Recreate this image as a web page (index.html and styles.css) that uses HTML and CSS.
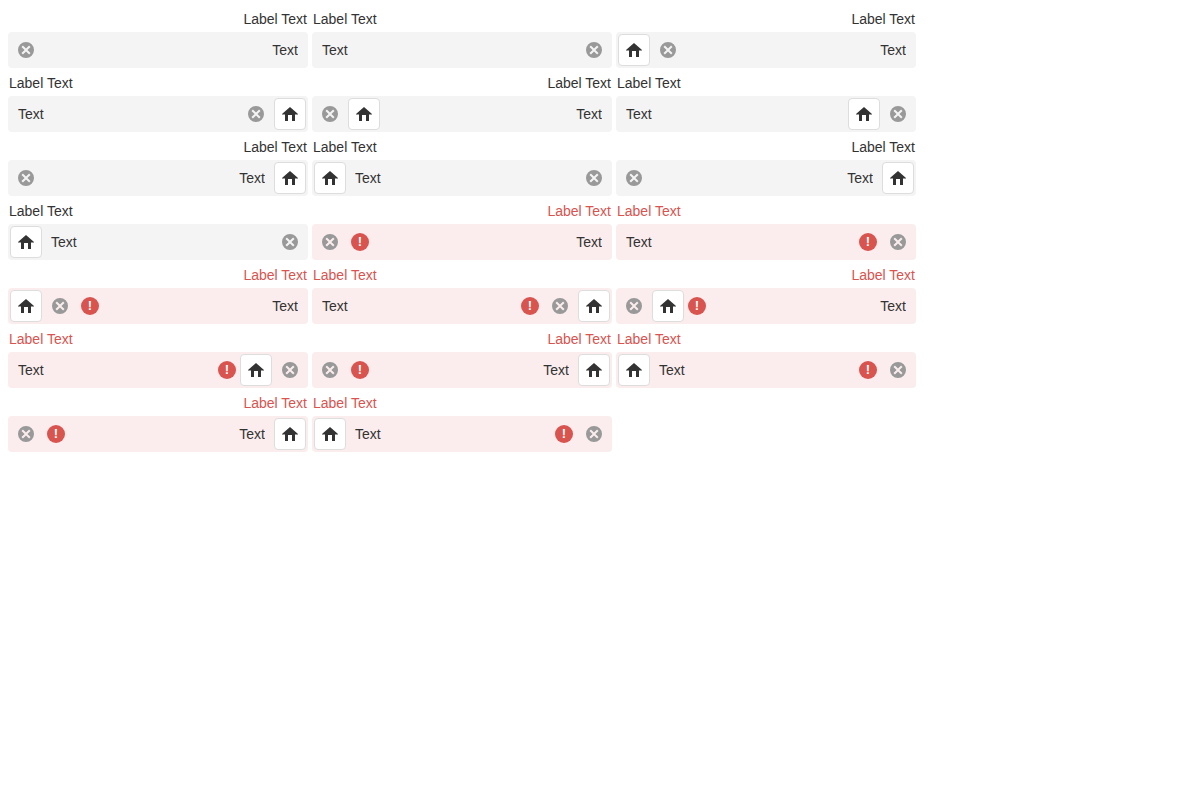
FILE: index.html
```html
<!DOCTYPE html>
<html lang="en">
<head>
<meta charset="utf-8">
<title>Text fields</title>
<link rel="stylesheet" href="styles.css">
</head>
<body>
<svg class="sprite" aria-hidden="true">
  <symbol id="home" viewBox="0 0 16 14"><path d="M8 0L16 7V7.400H13V14H10V8H6V14H3V7.400H0V7Z"/></symbol>
  <symbol id="clear" viewBox="0 0 16 16"><path fill-rule="evenodd" d="M8 0a8 8 0 1 0 0 16A8 8 0 1 0 8 0ZM4.900 3.500L8 6.600L11.100 3.500L12.500 4.900L9.400 8L12.500 11.100L11.100 12.500L8 9.400L4.900 12.500L3.500 11.100L6.600 8L3.500 4.900Z"/></symbol>
</svg>
<main class="fields">
  <div class="field end">
    <label class="label" for="f1">Label Text</label>
    <div class="box"><button class="clear" aria-label="Clear"><svg><use href="#clear"/></svg></button><input class="input" id="f1" value="Text"></div>
  </div>
  <div class="field">
    <label class="label" for="f2">Label Text</label>
    <div class="box"><input class="input" id="f2" value="Text"><button class="clear" aria-label="Clear"><svg><use href="#clear"/></svg></button></div>
  </div>
  <div class="field end">
    <label class="label" for="f3">Label Text</label>
    <div class="box"><button class="action" aria-label="Home"><svg><use href="#home"/></svg></button><button class="clear" aria-label="Clear"><svg><use href="#clear"/></svg></button><input class="input" id="f3" value="Text"></div>
  </div>
  <div class="field">
    <label class="label" for="f4">Label Text</label>
    <div class="box"><input class="input" id="f4" value="Text"><button class="clear" aria-label="Clear"><svg><use href="#clear"/></svg></button><button class="action" aria-label="Home"><svg><use href="#home"/></svg></button></div>
  </div>
  <div class="field end">
    <label class="label" for="f5">Label Text</label>
    <div class="box"><button class="clear" aria-label="Clear"><svg><use href="#clear"/></svg></button><button class="action" aria-label="Home"><svg><use href="#home"/></svg></button><input class="input" id="f5" value="Text"></div>
  </div>
  <div class="field">
    <label class="label" for="f6">Label Text</label>
    <div class="box"><input class="input" id="f6" value="Text"><button class="action" aria-label="Home"><svg><use href="#home"/></svg></button><button class="clear" aria-label="Clear"><svg><use href="#clear"/></svg></button></div>
  </div>
  <div class="field end">
    <label class="label" for="f7">Label Text</label>
    <div class="box"><button class="clear" aria-label="Clear"><svg><use href="#clear"/></svg></button><input class="input" id="f7" value="Text"><button class="action" aria-label="Home"><svg><use href="#home"/></svg></button></div>
  </div>
  <div class="field">
    <label class="label" for="f8">Label Text</label>
    <div class="box"><button class="action" aria-label="Home"><svg><use href="#home"/></svg></button><input class="input" id="f8" value="Text"><button class="clear" aria-label="Clear"><svg><use href="#clear"/></svg></button></div>
  </div>
  <div class="field end">
    <label class="label" for="f9">Label Text</label>
    <div class="box"><button class="clear" aria-label="Clear"><svg><use href="#clear"/></svg></button><input class="input" id="f9" value="Text"><button class="action" aria-label="Home"><svg><use href="#home"/></svg></button></div>
  </div>
  <div class="field">
    <label class="label" for="f10">Label Text</label>
    <div class="box"><button class="action" aria-label="Home"><svg><use href="#home"/></svg></button><input class="input" id="f10" value="Text"><button class="clear" aria-label="Clear"><svg><use href="#clear"/></svg></button></div>
  </div>
  <div class="field end invalid">
    <label class="label" for="f11">Label Text</label>
    <div class="box"><button class="clear" aria-label="Clear"><svg><use href="#clear"/></svg></button><span class="error">!</span><input class="input" id="f11" value="Text"></div>
  </div>
  <div class="field invalid">
    <label class="label" for="f12">Label Text</label>
    <div class="box"><input class="input" id="f12" value="Text"><span class="error">!</span><button class="clear" aria-label="Clear"><svg><use href="#clear"/></svg></button></div>
  </div>
  <div class="field end invalid">
    <label class="label" for="f13">Label Text</label>
    <div class="box"><button class="action" aria-label="Home"><svg><use href="#home"/></svg></button><button class="clear" aria-label="Clear"><svg><use href="#clear"/></svg></button><span class="error">!</span><input class="input" id="f13" value="Text"></div>
  </div>
  <div class="field invalid">
    <label class="label" for="f14">Label Text</label>
    <div class="box"><input class="input" id="f14" value="Text"><span class="error">!</span><button class="clear" aria-label="Clear"><svg><use href="#clear"/></svg></button><button class="action" aria-label="Home"><svg><use href="#home"/></svg></button></div>
  </div>
  <div class="field end invalid">
    <label class="label" for="f15">Label Text</label>
    <div class="box"><button class="clear" aria-label="Clear"><svg><use href="#clear"/></svg></button><button class="action" aria-label="Home"><svg><use href="#home"/></svg></button><span class="error">!</span><input class="input" id="f15" value="Text"></div>
  </div>
  <div class="field invalid">
    <label class="label" for="f16">Label Text</label>
    <div class="box"><input class="input" id="f16" value="Text"><span class="error">!</span><button class="action" aria-label="Home"><svg><use href="#home"/></svg></button><button class="clear" aria-label="Clear"><svg><use href="#clear"/></svg></button></div>
  </div>
  <div class="field end invalid">
    <label class="label" for="f17">Label Text</label>
    <div class="box"><button class="clear" aria-label="Clear"><svg><use href="#clear"/></svg></button><span class="error">!</span><input class="input" id="f17" value="Text"><button class="action" aria-label="Home"><svg><use href="#home"/></svg></button></div>
  </div>
  <div class="field invalid">
    <label class="label" for="f18">Label Text</label>
    <div class="box"><button class="action" aria-label="Home"><svg><use href="#home"/></svg></button><input class="input" id="f18" value="Text"><span class="error">!</span><button class="clear" aria-label="Clear"><svg><use href="#clear"/></svg></button></div>
  </div>
  <div class="field end invalid">
    <label class="label" for="f19">Label Text</label>
    <div class="box"><button class="clear" aria-label="Clear"><svg><use href="#clear"/></svg></button><span class="error">!</span><input class="input" id="f19" value="Text"><button class="action" aria-label="Home"><svg><use href="#home"/></svg></button></div>
  </div>
  <div class="field invalid">
    <label class="label" for="f20">Label Text</label>
    <div class="box"><button class="action" aria-label="Home"><svg><use href="#home"/></svg></button><input class="input" id="f20" value="Text"><span class="error">!</span><button class="clear" aria-label="Clear"><svg><use href="#clear"/></svg></button></div>
  </div>
</main>
</body>
</html>
```
FILE: styles.css
```css
* { box-sizing: border-box; }

body {
  margin: 8px;
  background: #fff;
  color: #333;
  font: 14px "Liberation Sans", Arial, sans-serif;
}

.sprite { display: none; }

.fields {
  display: flex;
  flex-wrap: wrap;
  gap: 4px;
}

.field { width: 300px; }

.label {
  display: block;
  padding: 0 1px;
  margin-bottom: 2px;
  line-height: 22px;
}

.end .label,
.end .input { text-align: right; }

.box {
  display: flex;
  align-items: center;
  padding: 1px;
  border-radius: 4px;
  background: #f4f4f4;
}

.invalid .label { color: #d9534f; }
.invalid .box { background: #fbeded; }

.input {
  flex: 1;
  min-width: 0;
  height: 34px;
  padding: 0 9px;
  border: 0;
  outline: 0;
  background: none;
  color: #333;
  font: inherit;
}

.action + .input { padding-left: 8px; }
.input:has(+ .action) { padding-right: 8px; }

.clear,
.action {
  display: flex;
  flex: none;
  align-items: center;
  justify-content: center;
  padding: 0;
  cursor: pointer;
}

.clear {
  width: 34px;
  height: 34px;
  border: 0;
  background: none;
}

.clear svg {
  width: 16px;
  height: 16px;
  fill: #999;
}

.action {
  width: 32px;
  height: 32px;
  margin: 0 1px;
  border: 1px solid #ddd;
  border-radius: 4px;
  background: #fff;
}

.action svg {
  width: 16px;
  height: 14px;
  fill: #333;
}

.error {
  flex: none;
  width: 18px;
  margin: 0 4px;
  border-radius: 50%;
  background: #d9534f;
  color: #fff;
  font-size: 13px;
  font-weight: bold;
  line-height: 18px;
  text-align: center;
}

.action + .error { margin-left: 3px; }
.error:has(+ .action) { margin-right: 3px; }
```
